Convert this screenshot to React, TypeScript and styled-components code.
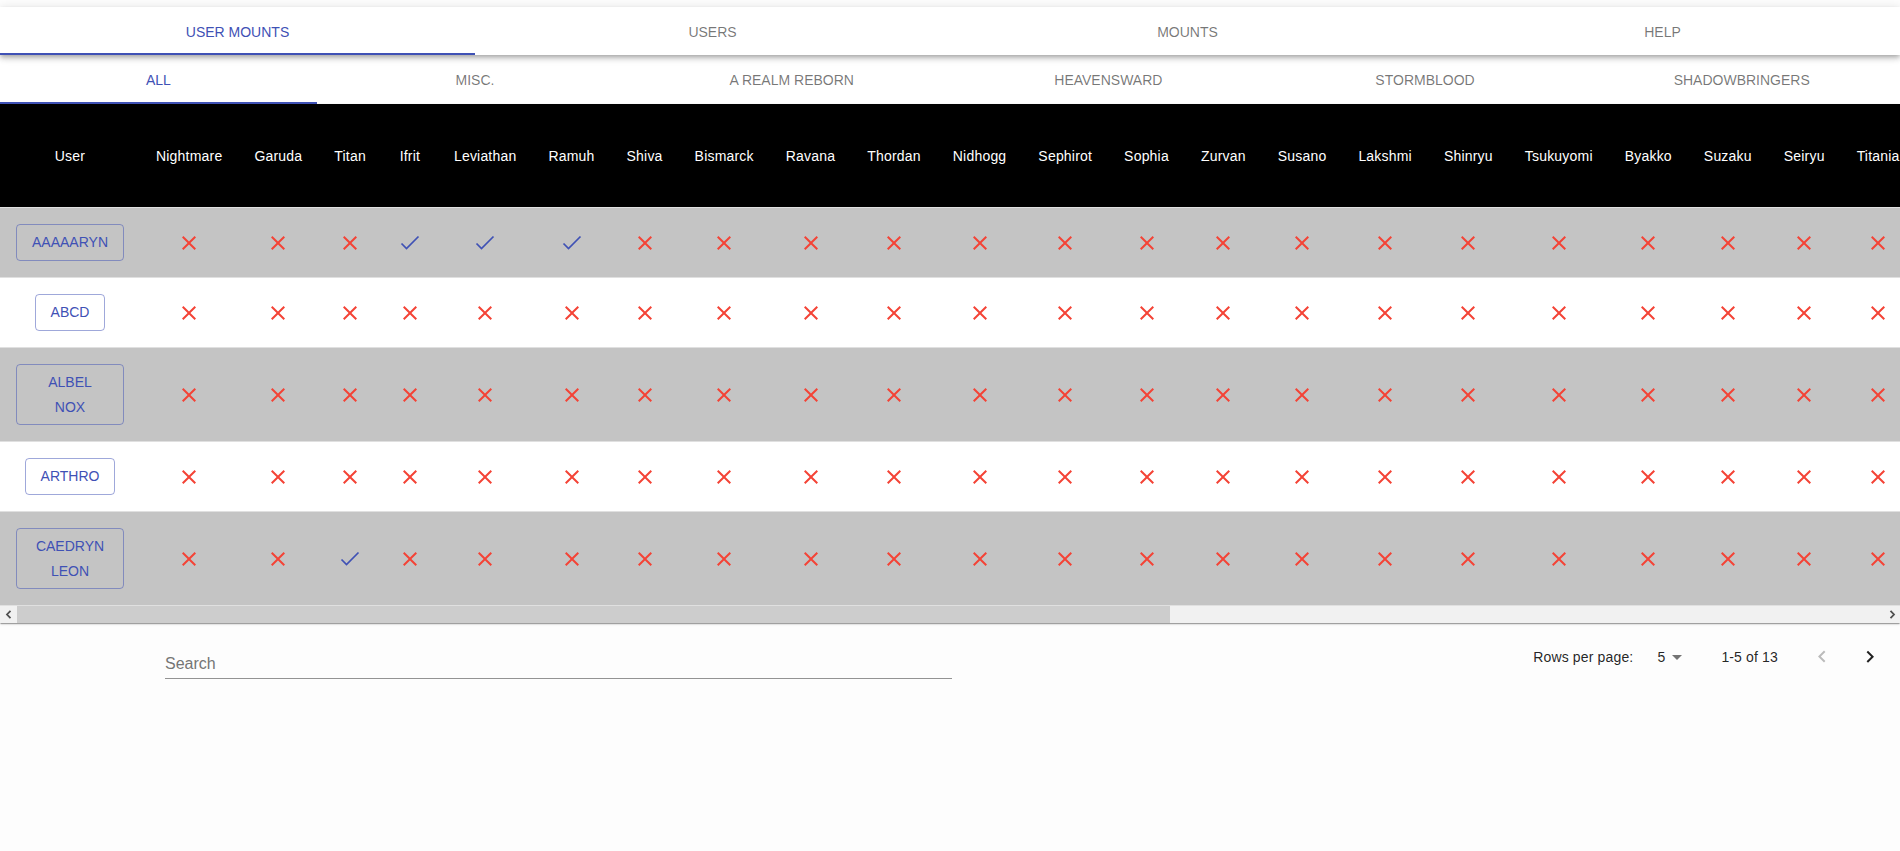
import React, { useLayoutEffect, useRef, useState } from "react";
import styled, { createGlobalStyle } from "styled-components";

const GlobalStyle = createGlobalStyle`
  *, *::before, *::after { box-sizing: border-box; }
  html, body { margin: 0; padding: 0; }
  body {
    background: #fdfdfd;
    font-family: "Liberation Sans", Arial, Helvetica, sans-serif;
    color: rgba(0, 0, 0, 0.87);
  }
`;

const Page = styled.div`
  padding-top: 7px;
  display: flex;
  flex-direction: column;
`;

const AppBar = styled.header`
  position: relative;
  z-index: 2;
  background: #ffffff;
  box-shadow: 0px 2px 4px -1px rgba(0, 0, 0, 0.2), 0px 4px 5px 0px rgba(0, 0, 0, 0.14),
    0px 1px 10px 0px rgba(0, 0, 0, 0.12);
`;

const TabRow = styled.nav<{ $height: number }>`
  display: flex;
  height: ${(p) => p.$height}px;
  background: #ffffff;
`;

const Tab = styled.button<{ $active?: boolean }>`
  position: relative;
  flex: 1 1 0;
  display: flex;
  align-items: center;
  justify-content: center;
  border: 0;
  background: transparent;
  padding: 1px 0 0;
  margin: 0;
  font-family: "Liberation Sans", Arial, sans-serif;
  font-size: 14px;
  font-weight: 400;
  text-transform: uppercase;
  color: ${(p) => (p.$active ? "#3f51b5" : "rgba(0, 0, 0, 0.54)")};
  cursor: pointer;

  &::after {
    content: "";
    position: absolute;
    left: 0;
    right: 0;
    bottom: 0;
    height: 2px;
    background: ${(p) => (p.$active ? "#3f51b5" : "transparent")};
  }
`;

const Paper = styled.section`
  background: #ffffff;
  box-shadow: 0px 2px 1px -1px rgba(0, 0, 0, 0.2), 0px 1px 1px 0px rgba(0, 0, 0, 0.14),
    0px 1px 3px 0px rgba(0, 0, 0, 0.12);
`;

const Scroller = styled.div`
  overflow-x: auto;
  overflow-y: hidden;
  scrollbar-width: none;

  &::-webkit-scrollbar {
    display: none;
  }
`;

const ScrollBar = styled.div`
  display: flex;
  height: 17px;
  background: #f1f1f1;
`;

const ScrollArrow = styled.div`
  flex: 0 0 17px;
  display: flex;
  align-items: center;
  justify-content: center;
`;

const ScrollTrack = styled.div`
  flex: 1;
  display: flex;
`;

const ScrollThumb = styled.div`
  height: 100%;
  background: #cdcdcd;
`;

const Table = styled.table`
  width: min-content;
  border-collapse: separate;
  border-spacing: 0;
  font-size: 14px;
`;

const HeadCell = styled.th`
  height: 104px;
  padding: 0 16px;
  background: #000000;
  color: #ffffff;
  font-weight: 400;
  font-size: 14px;
  letter-spacing: 0.2px;
  line-height: 24px;
  text-align: center;
  vertical-align: middle;
  white-space: nowrap;
  border-bottom: 1px solid #e0e0e0;
`;

const Row = styled.tr<{ $shaded: boolean }>`
  background: ${(p) => (p.$shaded ? "#c4c4c4" : "#ffffff")};
`;

const Cell = styled.td`
  height: 70px;
  padding: 16px;
  text-align: center;
  vertical-align: middle;
  border-bottom: 1px solid #e0e0e0;
`;

const UserButton = styled.button`
  display: inline-block;
  padding: 5px 15px;
  min-width: 64px;
  border: 1px solid rgba(63, 81, 181, 0.5);
  border-radius: 4px;
  background: transparent;
  color: #3f51b5;
  font-family: "Liberation Sans", Arial, sans-serif;
  font-size: 14px;
  font-weight: 400;
  line-height: 24.5px;
  text-transform: uppercase;
  cursor: pointer;
`;

const MarkIcon = styled.svg`
  display: block;
  margin: 0 auto;
`;

const Footer = styled.div`
  display: flex;
  align-items: flex-start;
  margin-top: 8px;
`;

const SearchField = styled.label`
  display: block;
  width: 787px;
  margin: 16px 0 0 165px;
  border-bottom: 1px solid rgba(0, 0, 0, 0.42);
`;

const SearchInput = styled.input`
  display: block;
  width: 100%;
  height: 31px;
  padding: 8px 0 5px;
  border: 0;
  outline: none;
  background: transparent;
  font-family: "Liberation Sans", Arial, sans-serif;
  font-size: 16px;
  color: rgba(0, 0, 0, 0.87);

  &::placeholder {
    color: #757575;
    opacity: 1;
  }
`;

const Pagination = styled.div`
  flex: 1;
  display: flex;
  align-items: center;
  justify-content: flex-end;
  height: 52px;
  padding-right: 6px;
  font-size: 14px;
  color: rgba(0, 0, 0, 0.87);
`;

const Caption = styled.span`
  white-space: nowrap;
  letter-spacing: 0.15px;
`;

const RowsSelect = styled.div`
  display: flex;
  align-items: center;
  margin: 0 32px 0 8px;
  padding-left: 8px;
  cursor: pointer;
`;

const SelectValue = styled.span`
  min-width: 16px;
  text-align: right;
`;

const Actions = styled.div`
  display: flex;
  margin-left: 20px;
`;

const IconButton = styled.button<{ $disabled?: boolean }>`
  width: 48px;
  height: 48px;
  padding: 12px;
  border: 0;
  border-radius: 50%;
  background: transparent;
  color: ${(p) => (p.$disabled ? "rgba(0, 0, 0, 0.26)" : "rgba(0, 0, 0, 0.87)")};
  display: flex;
  align-items: center;
  justify-content: center;
  cursor: ${(p) => (p.$disabled ? "default" : "pointer")};
`;

const mounts = [
  "Nightmare", "Garuda", "Titan", "Ifrit", "Leviathan", "Ramuh", "Shiva", "Bismarck",
  "Ravana", "Thordan", "Nidhogg", "Sephirot", "Sophia", "Zurvan", "Susano", "Lakshmi",
  "Shinryu", "Tsukuyomi", "Byakko", "Suzaku", "Seiryu", "Titania", "Innocence", "Hades",
  "Ruby", "Varis", "Emerald", "Diamond", "Kirin", "Ixion", "Gabriel", "Bahamut",
  "Alexander", "Omega", "Gwiber", "Odin", "Tiamat",
];

const users: { name: string; owned: string[] }[] = [
  { name: "AAAAARYN", owned: ["Ifrit", "Leviathan", "Ramuh"] },
  { name: "ABCD", owned: [] },
  { name: "ALBEL NOX", owned: [] },
  { name: "ARTHRO", owned: [] },
  { name: "CAEDRYN LEON", owned: ["Titan"] },
];

const CrossIcon = () => (
  <MarkIcon width="24" height="24" viewBox="0 0 24 24" aria-label="missing">
    <path
      fill="#f44336"
      d="M19 6.41L17.59 5 12 10.59 6.41 5 5 6.41 10.59 12 5 17.59 6.41 19 12 13.41 17.59 19 19 17.59 13.41 12z"
    />
  </MarkIcon>
);

const CheckIcon = () => (
  <MarkIcon width="24" height="24" viewBox="0 0 24 24" aria-label="owned">
    <path d="M3.5 12.5 L8.5 17.5 L20.5 5.5" fill="none" stroke="#3f51b5" strokeWidth="1.7" />
  </MarkIcon>
);

const topTabs = ["User Mounts", "Users", "Mounts", "Help"];
const subTabs = ["All", "Misc.", "A Realm Reborn", "Heavensward", "Stormblood", "Shadowbringers"];

export default function App() {
  const scrollerRef = useRef<HTMLDivElement>(null);
  const [thumbRatio, setThumbRatio] = useState(0.617);

  useLayoutEffect(() => {
    const el = scrollerRef.current;
    if (el && el.scrollWidth > 0) {
      setThumbRatio(Math.min(1, el.clientWidth / el.scrollWidth));
    }
  }, []);

  return (
    <>
      <GlobalStyle />
      <Page>
        <AppBar>
          <TabRow $height={48}>
            {topTabs.map((t, i) => (
              <Tab key={t} $active={i === 0}>
                {t}
              </Tab>
            ))}
          </TabRow>
        </AppBar>
        <TabRow $height={49}>
          {subTabs.map((t, i) => (
            <Tab key={t} $active={i === 0}>
              {t}
            </Tab>
          ))}
        </TabRow>
        <Paper>
          <Scroller ref={scrollerRef}>
            <Table>
              <thead>
                <tr>
                  <HeadCell>User</HeadCell>
                  {mounts.map((m) => (
                    <HeadCell key={m}>{m}</HeadCell>
                  ))}
                </tr>
              </thead>
              <tbody>
                {users.map((u, i) => (
                  <Row key={u.name} $shaded={i % 2 === 0}>
                    <Cell>
                      <UserButton>{u.name}</UserButton>
                    </Cell>
                    {mounts.map((m) => (
                      <Cell key={m}>{u.owned.includes(m) ? <CheckIcon /> : <CrossIcon />}</Cell>
                    ))}
                  </Row>
                ))}
              </tbody>
            </Table>
          </Scroller>
          <ScrollBar>
            <ScrollArrow>
              <svg width="8" height="9" viewBox="0 0 8 9">
                <path d="M5.5 0.8 L2 4.5 L5.5 8.2" fill="none" stroke="#505050" strokeWidth="1.8" />
              </svg>
            </ScrollArrow>
            <ScrollTrack>
              <ScrollThumb style={{ width: `${thumbRatio * 100}%` }} />
            </ScrollTrack>
            <ScrollArrow>
              <svg width="8" height="9" viewBox="0 0 8 9">
                <path d="M2.5 0.8 L6 4.5 L2.5 8.2" fill="none" stroke="#505050" strokeWidth="1.8" />
              </svg>
            </ScrollArrow>
          </ScrollBar>
        </Paper>
        <Footer>
          <SearchField>
            <SearchInput placeholder="Search" />
          </SearchField>
          <Pagination>
            <Caption>Rows per page:</Caption>
            <RowsSelect>
              <SelectValue>5</SelectValue>
              <svg width="24" height="24" viewBox="0 0 24 24">
                <path d="M7 10l5 5 5-5z" fill="rgba(0,0,0,0.54)" />
              </svg>
            </RowsSelect>
            <Caption>1-5 of 13</Caption>
            <Actions>
              <IconButton $disabled aria-label="Previous page">
                <svg width="24" height="24" viewBox="0 0 24 24">
                  <path d="M15.41 16.09l-4.58-4.59 4.58-4.59L14 5.5l-6 6 6 6z" fill="currentColor" />
                </svg>
              </IconButton>
              <IconButton aria-label="Next page">
                <svg width="24" height="24" viewBox="0 0 24 24">
                  <path d="M8.59 16.34l4.58-4.59-4.58-4.59L10 5.75l6 6-6 6z" fill="currentColor" />
                </svg>
              </IconButton>
            </Actions>
          </Pagination>
        </Footer>
      </Page>
    </>
  );
}
